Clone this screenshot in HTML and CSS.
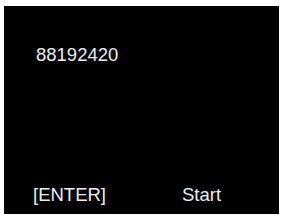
FILE: index.html
```html
<!DOCTYPE html>
<html lang="en">
<head>
  <meta charset="UTF-8">
  <title>Code</title>
  <link rel="stylesheet" href="styles.css">
</head>
<body>
  <div class="screen">
    <div class="code">88192420</div>
    <div class="keys">
      <span class="key">[ENTER]</span>
      <span class="key">Start</span>
    </div>
  </div>
</body>
</html>
```

FILE: styles.css
```css
body {
  margin: 0;
  background-color: #fff;
  font-family: "Liberation Sans", Arial, sans-serif;
}

.screen {
  margin: 6px 2px 0 4px;
  height: 208px;
  background-color: #000;
  color: #eee;
  font-size: 18.5px;
  display: flex;
  flex-direction: column;
  justify-content: space-between;
  padding: 38px 0 8px 0;
  box-sizing: border-box;
}

.code {
  padding-left: 32px;
  font-size: 18.5px;
}

.keys {
  display: flex;
  padding-left: 29px;
  gap: 76px;
}
```
